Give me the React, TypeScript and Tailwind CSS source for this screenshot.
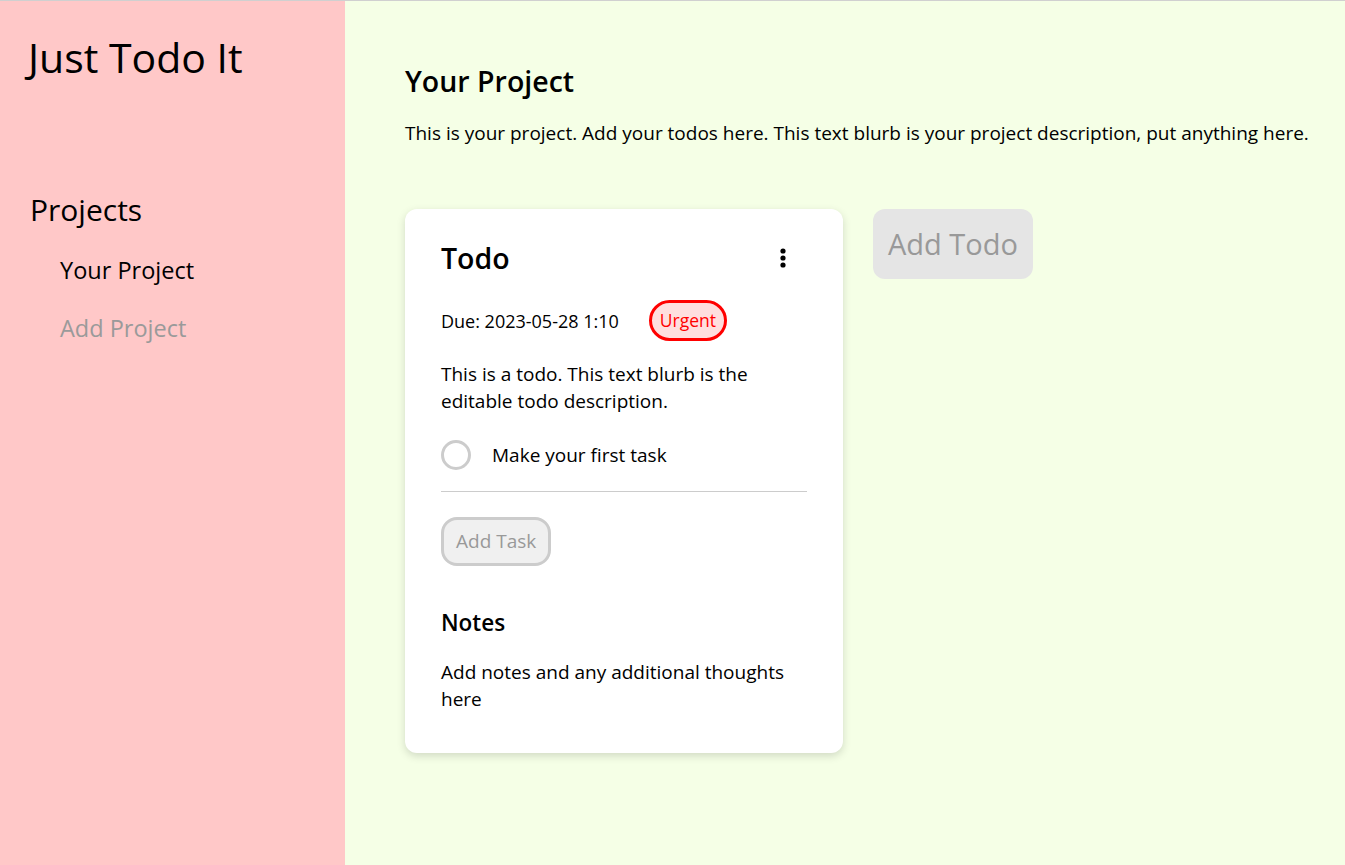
import React from "react";

export default function App() {
  return (
    <div
      className="flex w-full h-[865px] border-t border-[#d0d0d0] text-black"
      style={{ fontFamily: "'Open Sans', 'Noto Sans', sans-serif" }}
    >
      <aside className="w-[345px] shrink-0 bg-[#ffc8c8] pl-[28px] pt-[28px]">
        <h1 className="text-[41px] leading-[56px] font-medium">Just Todo It</h1>
        <h2 className="mt-[105px] ml-[2px] text-[30px] leading-[40px] font-medium">Projects</h2>
        <ul className="mt-[23px] ml-[32px] flex flex-col gap-[24px]">
          <li className="text-[23.5px] leading-[34px]">Your Project</li>
          <li className="text-[23.5px] leading-[34px] text-[#9a9a9a]">Add Project</li>
        </ul>
      </aside>
      <main className="flex-1 bg-[#f5ffe6] pl-[60px] pt-[62px]">
        <h2 className="text-[28.5px] leading-[36px] font-semibold">Your Project</h2>
        <p className="mt-[21px] text-[19px] leading-[27px]">
          This is your project. Add your todos here. This text blurb is your project description, put anything here.
        </p>
        <div className="mt-[62px] flex items-start gap-[30px]">
          <div className="w-[438px] bg-white rounded-[12px] shadow-[0_3px_8px_rgba(0,0,0,0.15)] px-[36px] pt-[29px] pb-[40px]">
            <div className="flex items-center justify-between">
              <h3 className="text-[28.5px] leading-[40px] font-semibold">Todo</h3>
              <svg width="8" height="22" viewBox="0 0 8 22" className="mr-[20px]">
                <circle cx="4" cy="4" r="2.6" fill="black" />
                <circle cx="4" cy="11" r="2.6" fill="black" />
                <circle cx="4" cy="18" r="2.6" fill="black" />
              </svg>
            </div>
            <div className="mt-[22px] flex items-center">
              <span className="text-[18px] leading-[24px]">Due: 2023-05-28 1:10</span>
              <span className="ml-[30px] rounded-full border-[3px] border-[#ff0000] bg-[#ffdede] text-[#ff0000] text-[17.5px] leading-[23px] px-[8px] py-[6px]">
                Urgent
              </span>
            </div>
            <p className="mt-[20px] text-[19px] leading-[27px]">
              This is a todo. This text blurb is the editable todo description.
            </p>
            <div className="mt-[25px] flex items-center">
              <span className="w-[30px] h-[30px] rounded-full border-[3px] border-[#cccccc] shrink-0" />
              <span className="ml-[21px] text-[19px] leading-[27px]">Make your first task</span>
            </div>
            <div className="mt-[21px] h-px bg-[#cccccc]" />
            <button className="mt-[25px] rounded-[16px] border-[3px] border-[#cccccc] bg-[#f0f0f0] text-[#999999] text-[19px] leading-[27px] px-[12px] py-[8px]">
              Add Task
            </button>
            <h4 className="mt-[42px] text-[22.5px] leading-[30px] font-semibold">Notes</h4>
            <p className="mt-[21px] text-[19px] leading-[27px]">
              Add notes and any additional thoughts here
            </p>
          </div>
          <button className="w-[160px] h-[70px] rounded-[12px] bg-[#e5e5e5] text-[#999999] text-[29px] leading-[36px]">
            Add Todo
          </button>
        </div>
      </main>
    </div>
  );
}
